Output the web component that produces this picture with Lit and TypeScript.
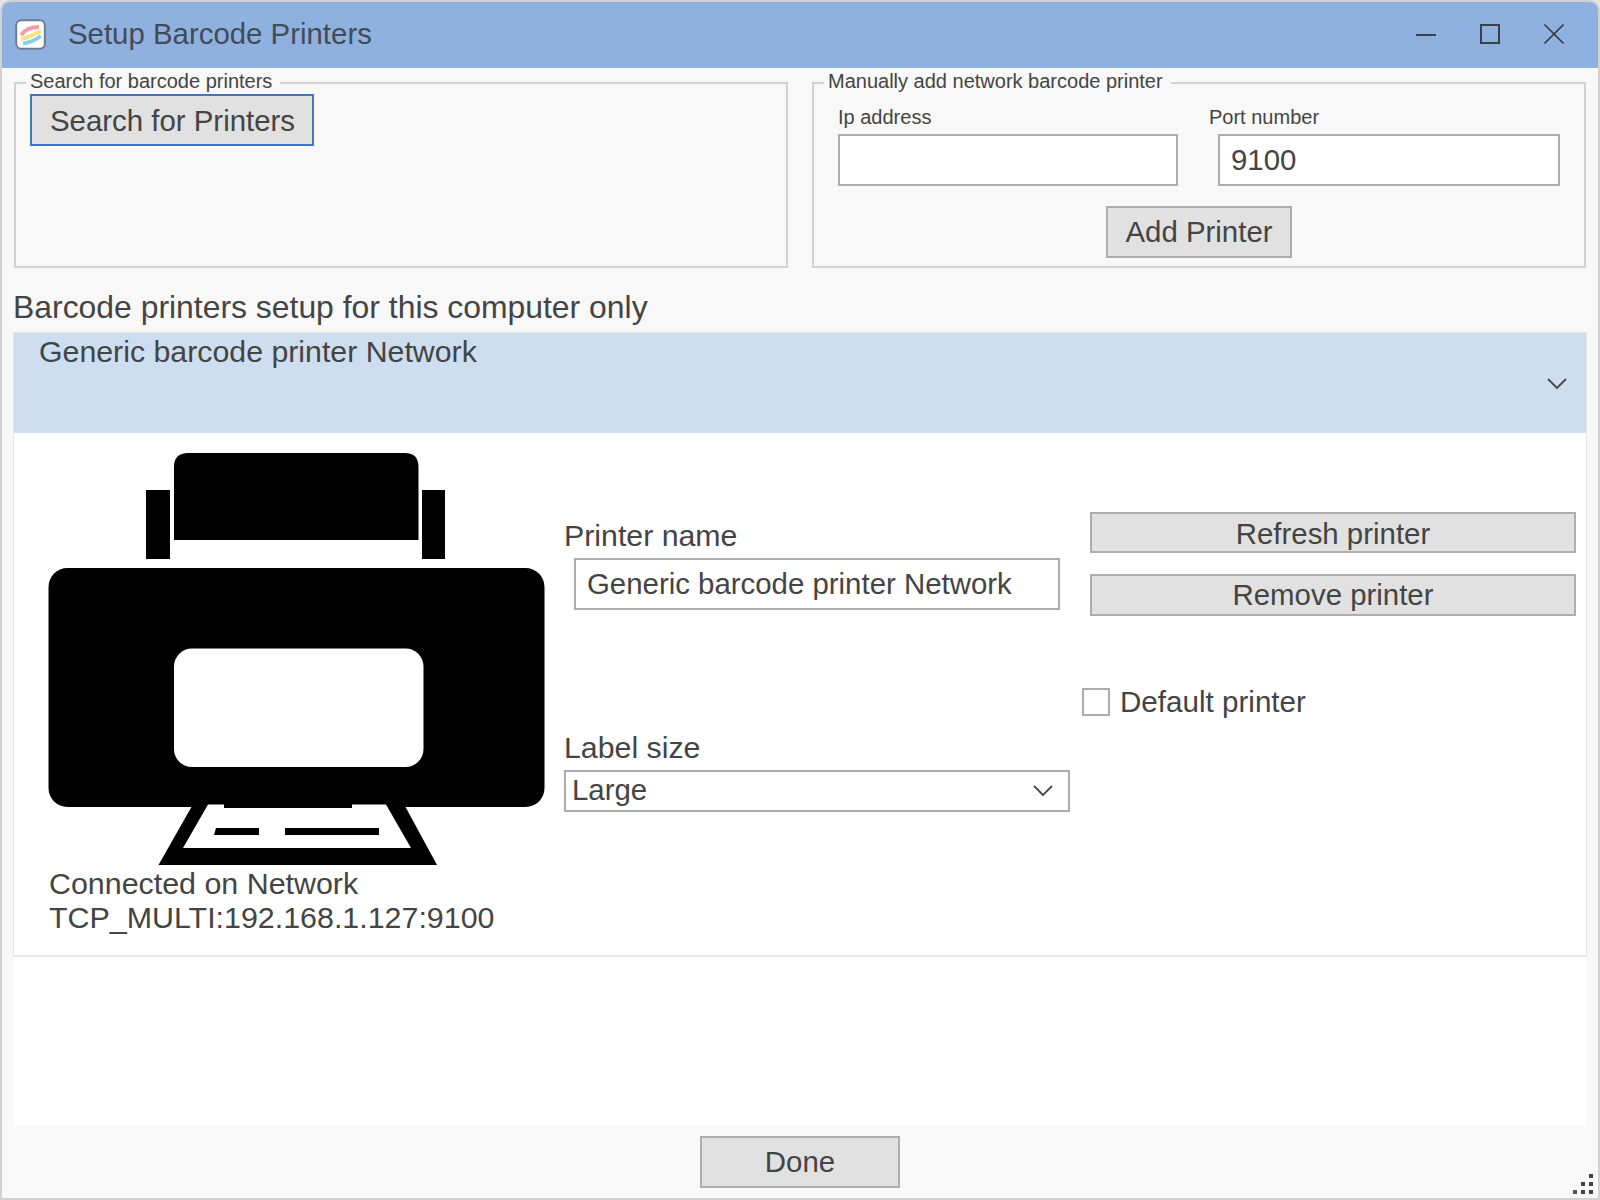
import { LitElement, html, css, svg } from "lit";
import { customElement } from "lit/decorators.js";

const chevron = svg`<polyline points="1,1 10,10 19,1" fill="none" stroke="#484848" stroke-width="1.8"/>`;

@customElement("app-root")
export class AppRoot extends LitElement {
  static styles = css`
    :host { display: block; width: 1600px; height: 1200px; font-family: "Liberation Sans", Arial, sans-serif; color: #444; background: #e8e8e8; }
    * { box-sizing: border-box; }
    .window { width: 1600px; height: 1200px; border: 2px solid #d2d2d2; border-radius: 10px 10px 0 0; background: #f8f8f8; display: flex; flex-direction: column; overflow: hidden; position: relative; }
    .titlebar { height: 66px; flex: none; background: #8fb1df; display: flex; align-items: center; padding: 0 34px 2px 13px; }
    .appicon { width: 31px; height: 31px; flex: none; }
    .title { margin-left: 22px; font-size: 29.4px; color: #434b58; flex: 1; line-height: 34px; }
    .winbtns { display: flex; gap: 44px; align-items: center; }
    .winbtns svg { width: 20px; height: 20px; display: block; }

    .top { display: flex; gap: 24px; padding: 2px 12px 0; flex: none; }
    fieldset { margin: 0; padding: 0; width: 774px; border: 2px solid #d2d2d2; min-inline-size: 0; }
    legend { margin-left: 10px; padding: 0 8px 4px 4px; font-size: 20px; line-height: 22px; color: #444; }
    .fs-inner { height: 170px; position: relative; margin-top: -2px; margin-bottom: 2px; }
    .fs-left { padding-left: 14px; }
    button { font-family: inherit; font-size: 29.4px; color: #444; background: #e1e1e1; border: 2px solid #adadad; border-radius: 0; padding: 0; display: block; }
    .search { width: 284px; height: 52px; border-color: #3e75c6; padding: 2px 0 0 1px; }
    .fields { display: grid; grid-template-columns: 340px 350px; column-gap: 31px; padding: 11px 0 0 24px; }
    .small { font-size: 20px; line-height: 24px; height: 29px; }
    input[type="text"] { font-family: inherit; font-size: 29.4px; color: #444; background: #fff; border: 2px solid #adadad; border-radius: 0; padding: 0 0 0 8px; outline: none; display: block; margin: 0; }
    .ip { width: 340px; height: 52px; }
    .port { width: 342px; height: 52px; margin-left: 9px !important; padding-left: 11px !important; }
    .addrow { display: flex; justify-content: center; margin-top: 20px; }
    .add { width: 186px; height: 52px; }

    .heading { font-size: 31.9px; line-height: 34px; padding: 22px 0 8px 11px; flex: none; }

    .scroll { flex: 1; margin: 0 12px; background: #fff; min-height: 0; }
    .panel { margin: 0 -1px; border: 1px solid #e5e5e5; border-bottom-width: 2px; background: #fff; }
    .phead { height: 100px; background: #cedef1; display: flex; align-items: center; justify-content: space-between; padding: 0 19px 0 25px; }
    .phead span { align-self: flex-start; padding-top: 2px; font-size: 30.3px; line-height: 34px; }
    .phead svg { width: 20px; height: 11px; display: block; }
    .pbody { height: 522px; display: flex; }
    .col1 { width: 551px; flex: none; padding: 17px 0 0 34px; }
    .col1 svg { display: block; width: 497px; height: 416px; }
    .status { font-size: 30.4px; line-height: 34px; margin-left: 1px; margin-top: -0.5px; }
    .col2 { width: 505px; flex: none; padding-top: 86px; }
    .lbl { font-size: 30.3px; line-height: 34px; margin-left: -1px; }
    .pname { width: 486px; height: 52px; margin: 5px 0 0 9px !important; padding-left: 11px !important; padding-bottom: 1px !important; }
    .lbl2 { margin-top: 121px; }
    .select { margin: 5px 0 0 -1px; width: 506px; height: 42px; border: 2px solid #adadad; background: #fff; display: flex; align-items: center; justify-content: space-between; padding: 0 15px 2px 6px; font-size: 29.4px; }
    .select svg { width: 20px; height: 11px; display: block; }
    .col3 { margin-left: 12px; padding-top: 79px; flex: 1; }
    .wide { width: 486px; margin-left: 8px; height: 41px; padding-top: 2px; }
    .wide2 { height: 42px; margin-top: 21px; padding-top: 0; }
    .check { display: flex; align-items: center; gap: 10px; margin-top: 69px; font-size: 29.6px; line-height: 34px; }
    .box { appearance: none; -webkit-appearance: none; width: 28px; height: 28px; margin: 0; border: 2px solid #adadad; background: #fff; flex: none; }

    .footer { height: 72px; flex: none; display: flex; justify-content: center; padding-top: 10px; }
    .done { width: 200px; height: 52px; }
    .grip { position: absolute; right: 5px; bottom: 4px; width: 20px; height: 20px; display: block; }
  `;

  render() {
    return html`
      <div class="window">
        <div class="titlebar">
          <svg class="appicon" viewBox="0 0 31 31">
            <rect x="1.2" y="1.2" width="28.6" height="28.6" rx="5" fill="#fff" stroke="#6e7c90" stroke-width="2"/>
            <path d="M6 16 Q12 8 24 8" fill="none" stroke="#f59aa5" stroke-width="3.8"/>
            <path d="M6 20 Q15 18 26 12" fill="none" stroke="#fbe17f" stroke-width="3.8"/>
            <path d="M8 24.5 Q17 23.5 26 17" fill="none" stroke="#7fd3ee" stroke-width="3.8"/>
          </svg>
          <div class="title">Setup Barcode Printers</div>
          <div class="winbtns">
            <svg viewBox="0 0 20 20"><rect x="0" y="10" width="20" height="2" fill="#3c3f46"/></svg>
            <svg viewBox="0 0 20 20"><rect x="1" y="1" width="18" height="18" fill="none" stroke="#3c3f46" stroke-width="2"/></svg>
            <svg viewBox="0 0 20 20"><path d="M0.5 0.5 L19.5 19.5 M19.5 0.5 L0.5 19.5" stroke="#3c3f46" stroke-width="1.6" fill="none"/></svg>
          </div>
        </div>

        <div class="top">
          <fieldset>
            <legend>Search for barcode printers</legend>
            <div class="fs-inner fs-left">
              <button class="search">Search for Printers</button>
            </div>
          </fieldset>
          <fieldset>
            <legend>Manually add network barcode printer</legend>
            <div class="fs-inner">
              <div class="fields">
                <div class="small">Ip address</div>
                <div class="small">Port number</div>
                <input class="ip" type="text" value="" />
                <input class="port" type="text" value="9100" />
              </div>
              <div class="addrow"><button class="add">Add Printer</button></div>
            </div>
          </fieldset>
        </div>

        <div class="heading">Barcode printers setup for this computer only</div>

        <div class="scroll">
          <div class="panel">
            <div class="phead">
              <span>Generic barcode printer Network</span>
              <svg viewBox="0 0 20 11">${chevron}</svg>
            </div>
            <div class="pbody">
              <div class="col1">
                <svg viewBox="48 450 497 416">
                  <path d="M174 540 V467 Q174 453 188 453 H405 Q418.5 453 418.5 467 V540 Z" fill="#000"/>
                  <rect x="146" y="490" width="24" height="69" fill="#000"/>
                  <rect x="422" y="490" width="23" height="69" fill="#000"/>
                  <rect x="48.5" y="568" width="496" height="239" rx="19" fill="#000"/>
                  <rect x="174" y="648.5" width="249.5" height="118.5" rx="18" fill="#fff"/>
                  <path d="M192 806 L158.5 865 H437 L405 806 Z" fill="#000"/>
                  <path d="M208 804.5 H224 V808 H352 V804.5 H386 L411 848 H183 Z" fill="#fff"/>
                  <path d="M216 828 H259 V835 H214 Z" fill="#000"/>
                  <rect x="285" y="828" width="94" height="7" fill="#000"/>
                </svg>
                <div class="status">Connected on Network<br />TCP_MULTI:192.168.1.127:9100</div>
              </div>
              <div class="col2">
                <div class="lbl">Printer name</div>
                <input class="pname" type="text" value="Generic barcode printer Network" />
                <div class="lbl lbl2">Label size</div>
                <div class="select">
                  <span>Large</span>
                  <svg viewBox="0 0 20 11">${chevron}</svg>
                </div>
              </div>
              <div class="col3">
                <button class="wide">Refresh printer</button>
                <button class="wide wide2">Remove printer</button>
                <div class="check"><input class="box" type="checkbox" /><span>Default printer</span></div>
              </div>
            </div>
          </div>
        </div>

        <div class="footer"><button class="done">Done</button></div>

        <svg class="grip" viewBox="0 0 20 20">
          <rect x="16" y="0" width="4" height="4" fill="#444"/>
          <rect x="8" y="8" width="4" height="4" fill="#444"/>
          <rect x="16" y="8" width="4" height="4" fill="#444"/>
          <rect x="0" y="16" width="4" height="4" fill="#555"/>
          <rect x="8" y="16" width="4" height="4" fill="#444"/>
          <rect x="16" y="16" width="4" height="4" fill="#444"/>
        </svg>
      </div>
    `;
  }
}
